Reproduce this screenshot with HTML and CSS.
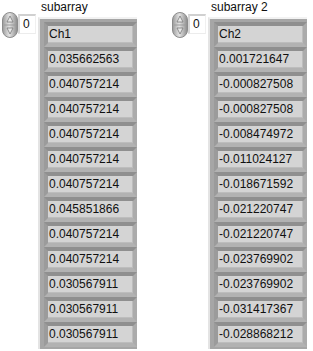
FILE: index.html
```html
<!DOCTYPE html>
<html lang="en">
<head>
  <meta charset="UTF-8" />
  <title>subarray</title>
  <link rel="stylesheet" href="styles.css">
</head>
<body>
  <div class="panel">
    <div class="arr">
      <div class="index">
        <svg class="spin" width="16" height="26" viewBox="0 0 16 26">
          <defs>
            <linearGradient id="g1" x1="0" x2="1" y1="0" y2="0">
              <stop offset="0" stop-color="#9a9a9a" />
              <stop offset="0.45" stop-color="#e4e4e4" />
              <stop offset="1" stop-color="#8a8a8a" />
            </linearGradient>
          </defs>
          <rect x="0.5" y="0.5" width="15" height="25" rx="7.5" fill="url(#g1)" stroke="#8c8c8c" />
          <line x1="2" y1="13" x2="14" y2="13" stroke="#9c9c9c" />
          <path d="M8 4 L11 10 L5 10 Z" fill="#e8e8e8" stroke="#7a7a7a" stroke-width="0.8" />
          <path d="M8 22 L11 16 L5 16 Z" fill="#e8e8e8" stroke="#7a7a7a" stroke-width="0.8" />
        </svg>
        <div class="idx">0</div>
      </div>
      <div class="col">
        <div class="label">subarray</div>
        <div class="frame">
          <div class="cell">Ch1</div>
          <div class="cell">0.035662563</div>
          <div class="cell">0.040757214</div>
          <div class="cell">0.040757214</div>
          <div class="cell">0.040757214</div>
          <div class="cell">0.040757214</div>
          <div class="cell">0.040757214</div>
          <div class="cell">0.045851866</div>
          <div class="cell">0.040757214</div>
          <div class="cell">0.040757214</div>
          <div class="cell">0.030567911</div>
          <div class="cell">0.030567911</div>
          <div class="cell">0.030567911</div>
        </div>
      </div>
    </div>

    <div class="arr">
      <div class="index">
        <svg class="spin" width="16" height="26" viewBox="0 0 16 26">
          <defs>
            <linearGradient id="g2" x1="0" x2="1" y1="0" y2="0">
              <stop offset="0" stop-color="#9a9a9a" />
              <stop offset="0.45" stop-color="#e4e4e4" />
              <stop offset="1" stop-color="#8a8a8a" />
            </linearGradient>
          </defs>
          <rect x="0.5" y="0.5" width="15" height="25" rx="7.5" fill="url(#g2)" stroke="#8c8c8c" />
          <line x1="2" y1="13" x2="14" y2="13" stroke="#9c9c9c" />
          <path d="M8 4 L11 10 L5 10 Z" fill="#e8e8e8" stroke="#7a7a7a" stroke-width="0.8" />
          <path d="M8 22 L11 16 L5 16 Z" fill="#e8e8e8" stroke="#7a7a7a" stroke-width="0.8" />
        </svg>
        <div class="idx">0</div>
      </div>
      <div class="col">
        <div class="label">subarray 2</div>
        <div class="frame">
          <div class="cell">Ch2</div>
          <div class="cell">0.001721647</div>
          <div class="cell">-0.000827508</div>
          <div class="cell">-0.000827508</div>
          <div class="cell">-0.008474972</div>
          <div class="cell">-0.011024127</div>
          <div class="cell">-0.018671592</div>
          <div class="cell">-0.021220747</div>
          <div class="cell">-0.021220747</div>
          <div class="cell">-0.023769902</div>
          <div class="cell">-0.023769902</div>
          <div class="cell">-0.031417367</div>
          <div class="cell">-0.028868212</div>
        </div>
      </div>
    </div>
  </div>
</body>
</html>
```

FILE: styles.css
```css
body {
  margin: 0;
  background: #fff;
  font-family: 'Liberation Sans', Arial, sans-serif;
  font-size: 12px;
  color: #101010;
}

.panel {
  display: flex;
  gap: 35px;
  padding-left: 2px;
}

.arr {
  display: flex;
  gap: 2px;
}

.index {
  display: flex;
  align-items: flex-start;
  padding-top: 12px;
}

.spin {
  display: block;
}

.idx {
  width: 18px;
  height: 20px;
  margin-top: 2px;
  box-sizing: border-box;
  padding-left: 3px;
  line-height: 17px;
  background: #fff;
  border-top: 2px solid #d0d0d0;
  border-left: 2px solid #d8d8d8;
  border-right: 1px solid #f0f0f0;
  border-bottom: 1px solid #ececec;
}

.label {
  height: 17px;
  line-height: 14px;
  padding-left: 3px;
}

.frame {
  border-left: 2px solid #e4e4e4;
  border-top: 2px solid #f2f2f2;
  background: #a6a6a6;
  padding: 3px 0 2px 4px;
  width: 93px;
}

.cell {
  height: 25px;
  box-sizing: border-box;
  border-top: 4px solid #8f8f8f;
  border-left: 4px solid #9b9b9b;
  border-right: 4px solid #ababab;
  border-bottom: 4px solid #b2b2b2;
  background: #d4d4d4;
  box-shadow: inset -1px -1px 0 #bdbdbd;
  padding-left: 1px;
  line-height: 17px;
  white-space: nowrap;
}
```
